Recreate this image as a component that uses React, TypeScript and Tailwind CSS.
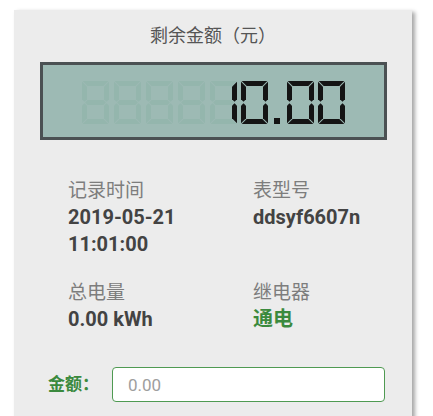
import React from "react";

const W = 27;
const H = 43;
const T = 5;
const G = 0.7;
const M = H / 2;

// seven segment polygons, keyed a..g
const SEGS: Record<string, number[][]> = {
  a: [[G, 0], [W - G, 0], [W - T - G, T], [T + G, T]],
  b: [[W, G], [W, M - T / 2 - G], [W - T / 2, M - G], [W - T, M - T / 2 - G], [W - T, T + G]],
  c: [[W, H - G], [W, M + T / 2 + G], [W - T / 2, M + G], [W - T, M + T / 2 + G], [W - T, H - T - G]],
  d: [[G, H], [W - G, H], [W - T - G, H - T], [T + G, H - T]],
  e: [[0, H - G], [0, M + T / 2 + G], [T / 2, M + G], [T, M + T / 2 + G], [T, H - T - G]],
  f: [[0, G], [0, M - T / 2 - G], [T / 2, M - G], [T, M - T / 2 - G], [T, T + G]],
  g: [[T / 2 + G, M], [T + G, M - T / 2], [W - T - G, M - T / 2], [W - T / 2 - G, M], [W - T - G, M + T / 2], [T + G, M + T / 2]],
};

const DIGITS: Record<string, string> = {
  "0": "abcdef",
  "1": "bc",
  "8": "abcdefg",
};

function Digit({ x, y, ch, color }: { x: number; y: number; ch: string; color: string }) {
  return (
    <g transform={`translate(${x} ${y})`}>
      {DIGITS[ch].split("").map((s) => (
        <polygon key={s} points={SEGS[s].map((p) => p.join(",")).join(" ")} fill={color} />
      ))}
    </g>
  );
}

function Lcd() {
  const ghost = [39, 71, 103, 135, 167];
  return (
    <div className="border-[3px] border-[#4b5153] bg-[#9dbab4] h-[78px]">
      <svg width="341" height="72" viewBox="0 0 341 72">
        {ghost.map((x) => (
          <Digit key={x} x={x} y={16} ch="8" color="#94b6ad" />
        ))}
        <Digit x={167} y={16} ch="1" color="#141414" />
        <Digit x={198} y={16} ch="0" color="#141414" />
        <rect x={231} y={53} width={6} height={6} fill="#141414" />
        <Digit x={244} y={16} ch="0" color="#141414" />
        <Digit x={275} y={16} ch="0" color="#141414" />
      </svg>
    </div>
  );
}

function Info({ label, children }: { label: string; children: React.ReactNode }) {
  return (
    <div className="flex flex-col">
      <span className="text-[19px] leading-[27px] text-[#7d7d7d]">{label}</span>
      {children}
    </div>
  );
}

export default function App() {
  return (
    <div
      className="min-h-[416px] w-[433px] bg-white pt-[10px] pl-[14px] overflow-hidden"
      style={{ fontFamily: 'Roboto, "Noto Sans CJK SC", sans-serif' }}
    >
      <div className="w-[398px] h-[420px] bg-[#ececec] shadow-[3px_2px_4px_rgba(0,0,0,0.35)] pt-[13px] px-[26px]">
        <div className="text-center text-[18px] leading-[26px] text-[#555555]">剩余金额（元）</div>
        <div className="mt-[13px] w-[347px]">
          <Lcd />
        </div>

        <div className="grid grid-cols-[185px_1fr] gap-y-[21px] pl-[28px] mt-[37px]">
          <Info label="记录时间">
            <span className="text-[20px] leading-[27px] font-bold text-[#434343]">2019-05-21</span>
            <span className="text-[20px] leading-[27px] font-bold text-[#434343]">11:01:00</span>
          </Info>
          <Info label="表型号">
            <span className="text-[20px] leading-[27px] font-bold text-[#434343]">ddsyf6607n</span>
          </Info>
          <Info label="总电量">
            <span className="text-[20px] leading-[27px] font-bold text-[#434343]">0.00 kWh</span>
          </Info>
          <Info label="继电器">
            <span className="text-[20px] leading-[27px] font-bold text-[#3b8a3e]">通电</span>
          </Info>
        </div>

        <div className="flex items-center mt-[34px] ml-[8px]">
          <span className="text-[17px] font-bold text-[#3b8a3e] w-[64px]">金额：</span>
          <input
            className="w-[273px] h-[35px] rounded-[4px] border border-[#4f9a52] bg-white px-[15px] text-[17px] outline-none placeholder:text-[#9e9e9e]"
            placeholder="0.00"
          />
        </div>
      </div>
    </div>
  );
}
